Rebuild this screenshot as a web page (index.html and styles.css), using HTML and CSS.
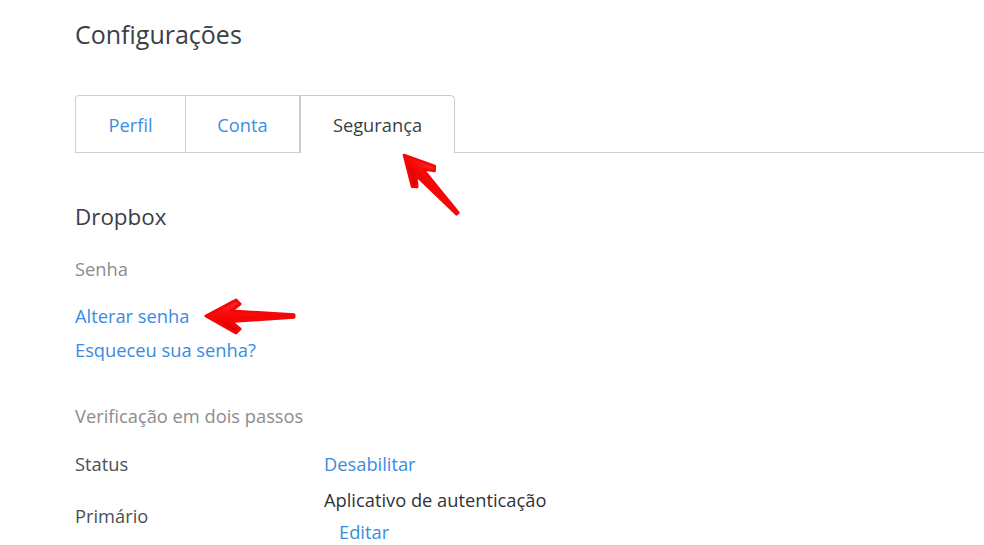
FILE: index.html
```html
<!DOCTYPE html>
<html lang="pt">
<head>
<meta charset="utf-8">
<title>Configurações</title>
<link rel="stylesheet" href="styles.css">
</head>
<body>
<div class="page">
  <h1 class="title">Configurações</h1>
  <div class="tabs">
    <a class="tab tab-first">Perfil</a>
    <a class="tab tab-mid">Conta</a>
    <span class="tab tab-active">Segurança</span>
    <span class="tab-fill"></span>
  </div>
  <h2 class="section">Dropbox</h2>
  <div class="label">Senha</div>
  <div class="links">
    <a class="link">Alterar senha</a>
    <a class="link">Esqueceu sua senha?</a>
  </div>
  <div class="label label-gap">Verificação em dois passos</div>
  <div class="row row-status">
    <div class="row-key">Status</div>
    <div class="row-val"><a class="link">Desabilitar</a></div>
  </div>
  <div class="row row-primary">
    <div class="row-key">Primário</div>
    <div class="row-val">
      <div class="val-text">Aplicativo de autenticação</div>
      <a class="link link-indent">Editar</a>
    </div>
  </div>
</div>
<svg class="arrows" width="984" height="545" viewBox="0 0 984 545" aria-hidden="true">
  <defs>
    <linearGradient id="rg" x1="0" y1="0" x2="0" y2="1">
      <stop offset="0" stop-color="#ff2a2a"/>
      <stop offset="0.5" stop-color="#f80606"/>
      <stop offset="1" stop-color="#d20000"/>
    </linearGradient>
  </defs>
  <g transform="translate(206 316)">
    <path class="arrow" d="M0 0 L30 -16 L34 -12 L25 -5 L88 -1.3 L88 1.3 L25 5.5 L34 13 L30 17 Z"/>
  </g>
  <g transform="translate(404 155) rotate(47.6) scale(0.9)">
    <path class="arrow" d="M0 0 L32 -17 L36 -13 L26 -5 L88 -1.3 L88 1.3 L26 5.5 L36 13 L32 17 Z"/>
  </g>
</svg>
</body>
</html>
```
FILE: styles.css
```css
html, body {
  margin: 0;
  padding: 0;
  background: #ffffff;
}
body {
  font-family: "Open Sans", "Noto Sans", sans-serif;
  color: #3d4247;
  width: 984px;
  height: 545px;
  overflow: hidden;
  position: relative;
}
.page {
  padding-left: 75px;
}
.title {
  margin: 18px 0 0;
  font-size: 25px;
  line-height: 32px;
  font-weight: 400;
  color: #3b4046;
}
.tabs {
  display: flex;
  margin-top: 45px;
  height: 58px;
}
.tab {
  box-sizing: border-box;
  height: 58px;
  display: flex;
  align-items: center;
  justify-content: center;
  font-size: 18.3px;
  color: #3d8de0;
  border: 1px solid #b7d6f3;
  border-bottom-color: #cfcfcf;
  background: #fff;
}
.tab-first {
  width: 111px;
  border-top-left-radius: 4px;
}
.tab-mid {
  width: 114px;
  border-left: none;
}
.tab-active {
  width: 155px;
  color: #3a3f44;
  border: 1px solid #c9c9c9;
  border-bottom: none;
  border-top-left-radius: 0;
  border-top-right-radius: 5px;
}
.tab-fill {
  flex: 1;
  border-bottom: 1px solid #cfcfcf;
}
.section {
  margin: 50px 0 0;
  font-size: 22.4px;
  line-height: 28px;
  font-weight: 400;
  color: #3b4046;
}
.label {
  margin-top: 26px;
  font-size: 18.3px;
  line-height: 24px;
  color: #8c8c8c;
}
.label-gap {
  margin-top: 37px;
}
.links {
  margin-top: 18px;
  display: flex;
  flex-direction: column;
  align-items: flex-start;
}
.link {
  color: #3a8be0;
  font-size: 18.3px;
  line-height: 34px;
  text-decoration: none;
}
.row {
  display: flex;
  align-items: center;
}
.row-status {
  margin-top: 24px;
}
.row-status .link {
  line-height: 24px;
}
.row-primary {
  margin-top: 8px;
}
.row-key {
  width: 249px;
  font-size: 18.3px;
  line-height: 24px;
  color: #4a4f54;
}
.row-val {
  display: flex;
  flex-direction: column;
  align-items: flex-start;
}
.val-text {
  font-size: 18.3px;
  line-height: 32px;
  color: #2f3338;
}
.row-primary .link {
  line-height: 32px;
}
.link-indent {
  margin-left: 15px;
}
.arrows {
  position: absolute;
  left: 0;
  top: 0;
  pointer-events: none;
}
.arrow {
  fill: url(#rg);
  stroke: #f20808;
  stroke-width: 3;
  stroke-linejoin: round;
}
```
